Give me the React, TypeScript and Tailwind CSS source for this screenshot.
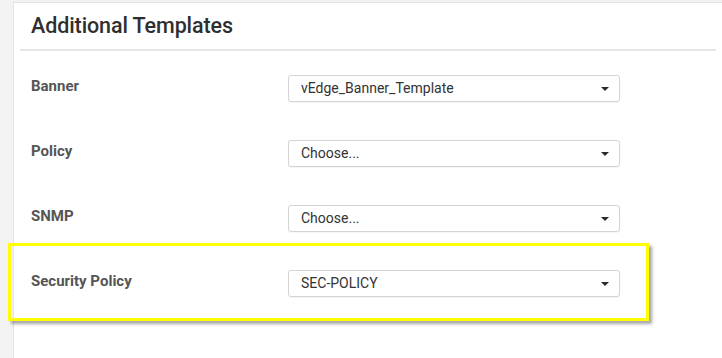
const rows = [
  { label: 'Banner', value: 'vEdge_Banner_Template' },
  { label: 'Policy', value: 'Choose...' },
  { label: 'SNMP', value: 'Choose...' },
  { label: 'Security Policy', value: 'SEC-POLICY' },
]

function Select({ value }: { value: string }) {
  return (
    <div className="w-[332px] h-[27px] flex items-center justify-between pl-[12px] pr-[8px] bg-white border border-[#d4d4d4] rounded-[3px] shadow-[0_1px_1px_rgba(0,0,0,0.04)]">
      <span className="text-[14px] text-[#333]">{value}</span>
      <svg width="10" height="6" viewBox="0 0 10 6" className="mr-[1px]">
        <path d="M1 1 L9 1 L5 5 Z" fill="#2b2b2b" />
      </svg>
    </div>
  )
}

export default function App() {
  return (
    <div
      className="relative w-[722px] h-[358px] overflow-hidden bg-[#f3f3f3] pl-[13px] pt-[2px]"
      style={{ fontFamily: 'Roboto, "Liberation Sans", sans-serif' }}
    >
      <div className="h-[400px] bg-white border-l border-t border-[#e2e2e2]">
        <div className="mx-[6px] h-[48px] flex items-center pl-[11px] border-b-2 border-[#e6e6e6]">
          <h1 className="text-[21.5px] font-medium text-[#2f2f2f] tracking-[-0.1px]">Additional Templates</h1>
        </div>

        <div className="pt-[24px] flex flex-col gap-[38px]">
          {rows.map((r) => (
            <div key={r.label} className="flex items-center">
              <div className="w-[274px] pl-[17px] -mt-[4px] text-[15px] font-bold text-[#555]">{r.label}</div>
              <Select value={r.value} />
            </div>
          ))}
        </div>
      </div>

      {/* highlight annotation */}
      <div className="absolute left-[8px] top-[243px] w-[641px] h-[78px] border-[3px] border-[#ffff00] shadow-[3px_3px_3px_rgba(0,0,0,0.35)]" />
    </div>
  )
}
